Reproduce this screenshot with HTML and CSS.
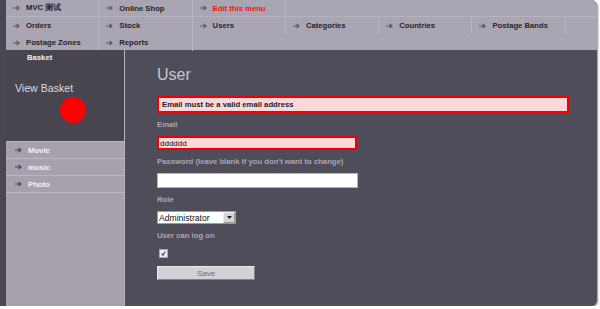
FILE: index.html
```html
<!DOCTYPE html>
<html lang="en">
<head>
    <meta charset="UTF-8">
    <meta name="viewport" content="width=device-width, initial-scale=1.0">
    <title>User</title>

    <link rel="stylesheet" href="styles.css">
</head>
<body>

    <div class="page">
        <div class="topnav">
            <div class="navrow first">
                <a class="navitem" href="#"><svg class="arrow" viewBox="0 0 7 6"><path d="M0 3h5.5M3.5 0.8 6 3 3.5 5.2"/></svg>MVC 测试</a>
                <a class="navitem" href="#"><svg class="arrow" viewBox="0 0 7 6"><path d="M0 3h5.5M3.5 0.8 6 3 3.5 5.2"/></svg>Online Shop</a>
                <a class="navitem edit" href="#"><svg class="arrow" viewBox="0 0 7 6"><path d="M0 3h5.5M3.5 0.8 6 3 3.5 5.2"/></svg>Edit this menu</a>
                <div class="navfill"></div>
            </div>
            <div class="navrow">
                <a class="navitem" href="#"><svg class="arrow" viewBox="0 0 7 6"><path d="M0 3h5.5M3.5 0.8 6 3 3.5 5.2"/></svg>Orders</a>
                <a class="navitem" href="#"><svg class="arrow" viewBox="0 0 7 6"><path d="M0 3h5.5M3.5 0.8 6 3 3.5 5.2"/></svg>Stock</a>
                <a class="navitem" href="#"><svg class="arrow" viewBox="0 0 7 6"><path d="M0 3h5.5M3.5 0.8 6 3 3.5 5.2"/></svg>Users</a>
                <a class="navitem" href="#"><svg class="arrow" viewBox="0 0 7 6"><path d="M0 3h5.5M3.5 0.8 6 3 3.5 5.2"/></svg>Categories</a>
                <a class="navitem" href="#"><svg class="arrow" viewBox="0 0 7 6"><path d="M0 3h5.5M3.5 0.8 6 3 3.5 5.2"/></svg>Countries</a>
                <a class="navitem" href="#"><svg class="arrow" viewBox="0 0 7 6"><path d="M0 3h5.5M3.5 0.8 6 3 3.5 5.2"/></svg>Postage Bands</a>
            </div>
            <div class="navrow">
                <a class="navitem" href="#"><svg class="arrow" viewBox="0 0 7 6"><path d="M0 3h5.5M3.5 0.8 6 3 3.5 5.2"/></svg>Postage Zones</a>
                <a class="navitem" href="#"><svg class="arrow" viewBox="0 0 7 6"><path d="M0 3h5.5M3.5 0.8 6 3 3.5 5.2"/></svg>Reports</a>
            </div>
        </div>

        <div class="layout">
            <div class="sidebar">
                <div class="basket">
                    <h3>Basket</h3>
                    <p class="view-basket">View Basket</p>
                    <span class="basket-dot"></span>
                </div>
                <ul class="catlist">
                    <li><a href="#"><svg class="arrow" viewBox="0 0 7 6"><path d="M0 3h5.5M3.5 0.8 6 3 3.5 5.2"/></svg>Movie</a></li>
                    <li><a href="#"><svg class="arrow" viewBox="0 0 7 6"><path d="M0 3h5.5M3.5 0.8 6 3 3.5 5.2"/></svg>music</a></li>
                    <li><a href="#"><svg class="arrow" viewBox="0 0 7 6"><path d="M0 3h5.5M3.5 0.8 6 3 3.5 5.2"/></svg>Photo</a></li>
                </ul>
            </div>

            <div class="main">
                <h1>User</h1>
                <div class="errorbox">Email must be a valid email address</div>

                <form class="userform">
                    <label for="email">Email</label>
                    <input type="text" id="email" class="text invalid" value="dddddd">

                    <label for="password">Password (leave blank if you don't want to change)</label>
                    <input type="password" id="password" class="text">

                    <label for="role">Role</label>
                    <div class="selectbox">
                        <select id="role">
                            <option>Administrator</option>
                        </select>
                        <span class="dropbtn"><svg viewBox="0 0 5 3"><path d="M0 0h5L2.5 3z"/></svg></span>
                    </div>

                    <label>User can log on</label>
                    <span class="checkbox"><svg viewBox="0 0 9 9"><path d="M2.2 4.6 3.8 6.8 6.8 1.8"/></svg></span>

                    <button type="button" class="save">Save</button>
                </form>
            </div>
        </div>
    </div>

</body>
</html>
```

FILE: styles.css
```css
body {
    margin: 0;
    background-color: #fff;
    font-family: "Liberation Sans", Arial, sans-serif;
}

.page {
    box-sizing: border-box;
    width: 597px;
    height: 306px;
    border-left: 6px solid #4a4752;
    border-radius: 0 6px 6px 0;
    background-color: #4f4d5a;
    box-shadow: 1px 1px 2px rgba(0, 0, 0, 0.45);
    overflow: hidden;
    display: flex;
    flex-direction: column;
}

/* top menu */

.topnav {
    background-color: #aaa5b3;
    height: 50px;
}

.navrow {
    display: flex;
    height: 17px;
}

.navrow.first {
    height: 16px;
    border-bottom: 1px solid #b6b2be;
}

.navitem {
    box-sizing: border-box;
    width: 93.3px;
    display: flex;
    align-items: center;
    padding-left: 7px;
    gap: 6px;
    border-right: 1px solid #bab6c2;
    color: #26242b;
    font-size: 7.7px;
    font-weight: bold;
    text-decoration: none;
    white-space: nowrap;
}

.navitem.edit {
    color: #f01414;
}

.navfill {
    flex: 1;
}

.arrow {
    width: 7px;
    height: 6px;
    flex-shrink: 0;
    fill: none;
    stroke: #57545e;
    stroke-width: 1.1;
}

/* page body */

.layout {
    flex: 1;
    display: flex;
}

.sidebar {
    width: 118px;
    border-right: 1px solid #b9b5c0;
    background-color: #a6a1ad;
}

.basket {
    height: 91px;
    background-color: #48454f;
    border-bottom: 1px solid #bbb7c2;
}

.basket h3 {
    margin: 0;
    padding-left: 21px;
    line-height: 16px;
    font-size: 7.7px;
    font-weight: bold;
    color: #f2f0f5;
}

.view-basket {
    margin: 15px 0 0;
    padding-left: 9px;
    line-height: 14px;
    font-size: 10.6px;
    color: #dcdae0;
}

.basket-dot {
    display: block;
    width: 26px;
    height: 26px;
    margin: 2px 0 0 54px;
    border-radius: 50%;
    background-color: #ff0000;
}

.catlist {
    list-style: none;
    margin: 0;
    padding: 0;
}

.catlist li {
    border-bottom: 1px solid #bbb7c2;
}

.catlist a {
    display: flex;
    align-items: center;
    gap: 6px;
    height: 16px;
    padding-left: 9px;
    color: #f3f1f6;
    font-size: 7.7px;
    font-weight: bold;
    text-decoration: none;
}

.catlist .arrow {
    stroke: #45424b;
}

.main {
    flex: 1;
    padding: 15px 0 0 32px;
}

.main h1 {
    margin: 0;
    line-height: 20px;
    font-size: 16px;
    font-weight: normal;
    color: #c8c5ce;
}

.errorbox {
    box-sizing: border-box;
    width: 412px;
    height: 17px;
    margin-top: 11px;
    padding: 0 3px;
    border: 2px solid #f20000;
    background-color: #fcd8da;
    line-height: 13px;
    font-size: 7.7px;
    font-weight: bold;
    color: #222;
}

/* form */

.userform label {
    display: block;
    margin: 6px 0 5px;
    line-height: 12px;
    font-size: 7.7px;
    font-weight: bold;
    color: #aaa6b2;
}

.userform .text {
    box-sizing: border-box;
    display: block;
    width: 201px;
    height: 15px;
    margin: 0;
    padding: 0 2px;
    border: 1px solid #b4b4c4;
    background-color: #fff;
    font-family: "Liberation Sans", Arial, sans-serif;
    font-size: 8px;
    color: #111;
    outline: none;
}

.userform .text.invalid {
    width: 200px;
    height: 14px;
    padding: 0 1px;
    border: 2px solid #f20000;
    background-color: #fcd8da;
}

.selectbox {
    box-sizing: border-box;
    display: flex;
    width: 79px;
    height: 13px;
    border: 1px solid #9c9ca8;
    background-color: #fff;
}

.selectbox select {
    appearance: none;
    flex: 1;
    min-width: 0;
    margin: 0;
    padding: 0 1px;
    border: none;
    background: transparent;
    font-family: "Liberation Sans", Arial, sans-serif;
    font-size: 8.6px;
    color: #111;
    outline: none;
}

.dropbtn {
    box-sizing: border-box;
    width: 12px;
    display: flex;
    align-items: center;
    justify-content: center;
    background-color: #d6d4da;
    border-left: 1px solid #eee;
    border-top: 1px solid #f4f4f4;
    border-bottom: 1px solid #999;
    border-right: 1px solid #999;
}

.dropbtn svg {
    width: 5px;
    height: 3px;
    fill: #222;
}

.checkbox {
    box-sizing: border-box;
    display: block;
    width: 9px;
    height: 9px;
    margin: 7px 0 0 2px;
    border: 1px solid #a9a9b6;
    background-color: #ececf2;
}

.checkbox svg {
    display: block;
    width: 7px;
    height: 7px;
    fill: none;
    stroke: #233a8a;
    stroke-width: 1.3;
}

.save {
    display: block;
    width: 98px;
    height: 14px;
    margin-top: 8px;
    padding: 0;
    border: 1px solid;
    border-color: #ebe9ee #86838c #86838c #ebe9ee;
    background-color: #d3d0d7;
    font-family: "Liberation Sans", Arial, sans-serif;
    font-size: 8px;
    color: #6f6c75;
}
```
